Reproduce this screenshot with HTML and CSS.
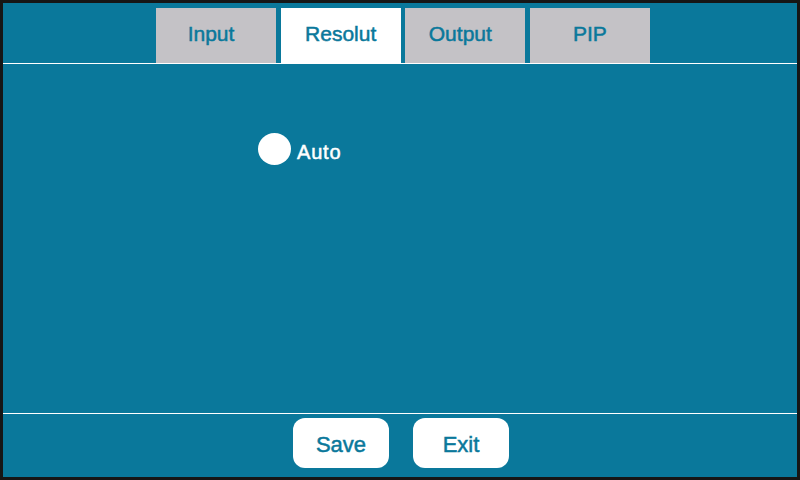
FILE: index.html
```html
<!DOCTYPE html>
<html lang="en">
<head>
    <meta charset="UTF-8">
    <meta name="viewport" content="width=device-width, initial-scale=1.0">
    <title>Settings</title>
    <link rel="stylesheet" href="styles.css">
</head>
<body>
    <div class="screen">
        <div class="tabs">
            <div class="tab tab-input">Input</div>
            <div class="tab active">Resolut</div>
            <div class="tab tab-output">Output</div>
            <div class="tab">PIP</div>
        </div>

        <div class="content">
            <div class="radio-row">
                <span class="radio"></span>
                <span class="radio-label">Auto</span>
            </div>
        </div>

        <div class="footer">
            <button class="btn">Save</button>
            <button class="btn">Exit</button>
        </div>
    </div>
</body>
</html>
```

FILE: styles.css
```css
body {
    margin: 0;
    font-family: "Liberation Sans", Arial, sans-serif;
}
.screen {
    width: 800px;
    height: 480px;
    box-sizing: border-box;
    border: 3px solid #161616;
    background-color: #0a789b;
    display: flex;
    flex-direction: column;
}
.tabs {
    display: flex;
    gap: 4.67px;
    padding: 5px 0 0 153px;
    border-bottom: 1px solid #ffffff;
}
.tab {
    width: 120px;
    height: 55px;
    box-sizing: border-box;
    padding-bottom: 4px;
    background-color: #c4c2c6;
    color: #0a789b;
    font-size: 21px;
    -webkit-text-stroke: 0.5px currentColor;
    display: flex;
    align-items: center;
    justify-content: center;
}
.tab-input,
.tab-output {
    padding-right: 10px;
}
.tab.active {
    background-color: #ffffff;
}
.content {
    height: 349px;
    box-sizing: border-box;
    padding: 69px 0 0 255px;
}
.radio-row {
    display: flex;
    align-items: center;
    gap: 6px;
}
.radio {
    width: 33px;
    height: 32px;
    border-radius: 50%;
    background-color: #ffffff;
}
.radio-label {
    color: #ffffff;
    font-size: 20px;
    letter-spacing: 0.8px;
    -webkit-text-stroke: 0.5px currentColor;
    padding-top: 6px;
}
.footer {
    border-top: 1px solid #ffffff;
    display: flex;
    justify-content: center;
    gap: 24px;
    padding: 4px 0 0 2px;
}
.btn {
    width: 96px;
    height: 50px;
    border: none;
    border-radius: 12px;
    background-color: #ffffff;
    color: #0a789b;
    font-family: "Liberation Sans", Arial, sans-serif;
    font-size: 22px;
    -webkit-text-stroke: 0.5px currentColor;
    padding: 4px 0 0 0;
}
```
